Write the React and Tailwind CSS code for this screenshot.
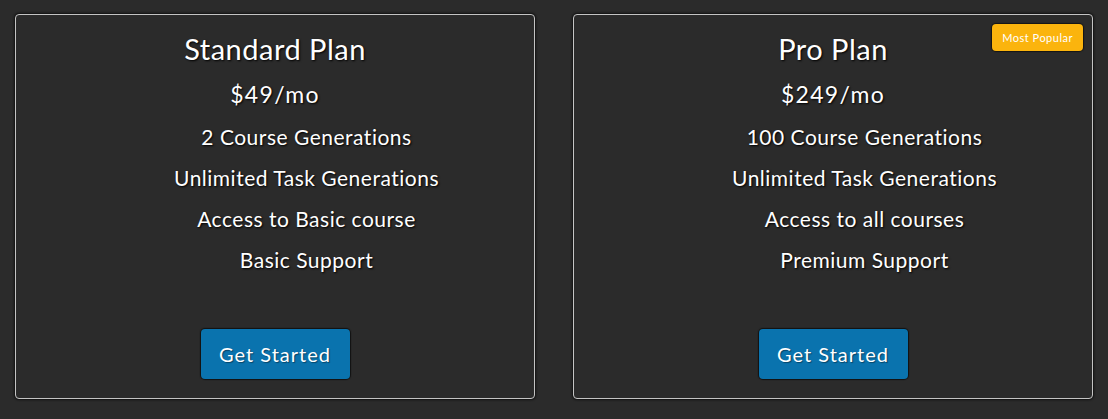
import React from 'react';

const plans = [
  {
    name: 'Standard Plan',
    price: '$49/mo',
    features: ['2 Course Generations', 'Unlimited Task Generations', 'Access to Basic course', 'Basic Support'],
    popular: false,
  },
  {
    name: 'Pro Plan',
    price: '$249/mo',
    features: ['100 Course Generations', 'Unlimited Task Generations', 'Access to all courses', 'Premium Support'],
    popular: true,
  },
];

function PlanCard({ plan }) {
  return (
    <div className="relative w-[520px] h-[385px] rounded-[4px] border border-[#c4c4c4] bg-[#2b2b2b] shadow-[0_0_2px_1px_#111] flex flex-col items-center pt-[17px]">
      {plan.popular && (
        <span className="absolute top-[9px] right-[9px] rounded-[4px] bg-[#fbb40d] px-[10px] py-[5.5px] text-[11px] leading-[16px] tracking-[0.5px] text-white shadow-[0_0_1px_1px_#151515]">
          Most Popular
        </span>
      )}
      <h2 className="text-[29px] leading-[34px] tracking-[0.5px] text-white [text-shadow:1px_1px_2px_#000]">{plan.name}</h2>
      <p className="mt-[14px] text-[23px] leading-[28px] tracking-[1.3px] text-white [text-shadow:1px_1px_2px_#000]">{plan.price}</p>
      <ul className="mt-[8px] w-full pl-[63px] text-center">
        {plan.features.map((f) => (
          <li key={f} className="h-[41px] text-[21px] leading-[41px] tracking-[0.5px] text-white [text-shadow:1px_1px_2px_#000]">
            {f}
          </li>
        ))}
      </ul>
      <button className="mt-[49px] h-[50px] w-[149px] rounded-[4px] bg-[#0a73ae] text-[20px] tracking-[1px] text-white shadow-[0_0_1px_1px_#111] [text-shadow:1px_1px_1px_#0006]">
        Get Started
      </button>
    </div>
  );
}

export default function App() {
  return (
    <div className="min-h-screen bg-[#2b2b2b] font-['Lato','Open_Sans',sans-serif]">
      <div className="flex gap-[38px] px-[15px] pt-[14px]">
        {plans.map((p) => (
          <PlanCard key={p.name} plan={p} />
        ))}
      </div>
    </div>
  );
}
